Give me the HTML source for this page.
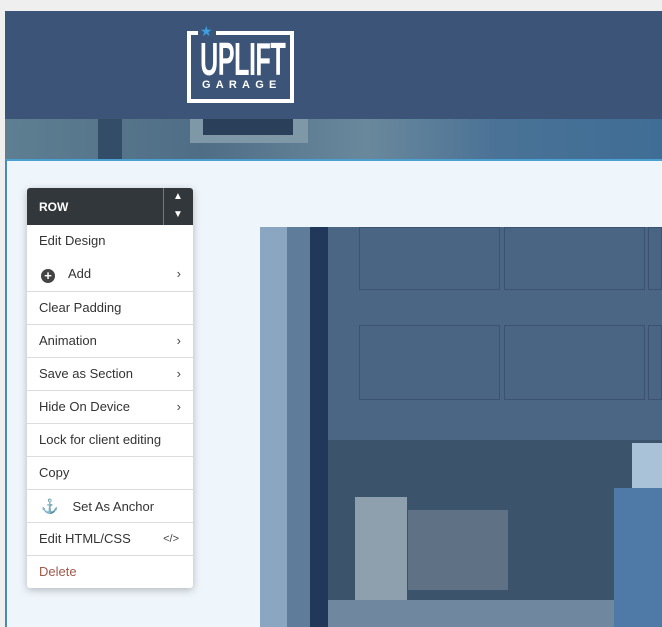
<!DOCTYPE html>
<html><head><style>
*{margin:0;padding:0;box-sizing:border-box}
body{width:662px;height:627px;overflow:hidden;background:#efefef;font-family:"Liberation Sans",sans-serif;position:relative}
.a{position:absolute}
.menu{left:27px;top:188px;width:166px;background:#fff;box-shadow:0 2px 8px rgba(0,0,0,.25);border-radius:3px}
.hd{height:37px;background:#32373b;color:#fff;font-size:12px;font-weight:bold;border-radius:3px 3px 0 0;position:relative}
.it{height:33px;border-top:1px solid #dcdcdc;font-size:13px;color:#333;padding-left:12px;line-height:32px;position:relative}
.ch{position:absolute;right:12px;top:0;font-size:13px;color:#444}
</style></head><body>
<div class="a" style="left:5px;top:11px;width:657px;height:108px;background:#3b5478"></div>
<div class="a" style="left:187px;top:31px;width:107px;height:72px;border:4px solid #fff"></div>
<div class="a" style="left:198px;top:27px;width:18px;height:10px;background:#3b5478"></div>
<div class="a" style="left:200px;top:23px;color:#3ca0e0;font-size:14px">★</div>
<div class="a" style="left:200px;top:36px;color:#fff;font:bold 46px/46px 'Liberation Sans',sans-serif;transform:scaleX(.55);transform-origin:left;letter-spacing:-1px;white-space:nowrap">UPLIFT</div>
<div class="a" style="left:202px;top:79px;color:#fff;font:bold 11px 'Liberation Sans',sans-serif;letter-spacing:5.2px">GARAGE</div>
<div class="a" style="left:5px;top:119px;width:657px;height:40px;background:linear-gradient(90deg,#5e7e92,#4f6e86 30%,#6a889c 55%,#4a7296 75%,#3f6d95)"></div>
<div class="a" style="left:98px;top:119px;width:24px;height:40px;background:#334d68"></div>
<div class="a" style="left:190px;top:119px;width:118px;height:24px;background:#7e98a8"></div>
<div class="a" style="left:203px;top:119px;width:90px;height:16px;background:#2a405a"></div>
<div class="a" style="left:5px;top:159px;width:657px;height:468px;background:#eef5fb;border-left:2px solid #4a8ab8;border-top:2px solid #4aa0d0"></div>
<!-- image -->
<div class="a" style="left:260px;top:227px;width:402px;height:400px;background:#4b6584"></div>
<div class="a" style="left:260px;top:227px;width:27px;height:400px;background:#8aa6c0"></div>
<div class="a" style="left:287px;top:227px;width:23px;height:400px;background:#5f7d9b"></div>
<div class="a" style="left:310px;top:227px;width:18px;height:400px;background:#22385a"></div>
<div class="a" style="left:359px;top:227px;width:141px;height:63px;background:#4a6483;border:1px solid #3b5371"></div>
<div class="a" style="left:504px;top:227px;width:141px;height:63px;background:#4a6483;border:1px solid #3b5371"></div>
<div class="a" style="left:648px;top:227px;width:14px;height:63px;background:#4a6483;border:1px solid #3b5371"></div>
<div class="a" style="left:359px;top:325px;width:141px;height:75px;background:#4a6483;border:1px solid #3b5371"></div>
<div class="a" style="left:504px;top:325px;width:141px;height:75px;background:#4a6483;border:1px solid #3b5371"></div>
<div class="a" style="left:648px;top:325px;width:14px;height:75px;background:#4a6483;border:1px solid #3b5371"></div>
<div class="a" style="left:328px;top:440px;width:334px;height:187px;background:#3c536c"></div>
<div class="a" style="left:355px;top:497px;width:52px;height:108px;background:#8ea0ae"></div>
<div class="a" style="left:408px;top:510px;width:100px;height:80px;background:#5f7184"></div>
<div class="a" style="left:328px;top:600px;width:334px;height:27px;background:#6f889f"></div>
<div class="a" style="left:632px;top:443px;width:30px;height:45px;background:#a9c2d8"></div>
<div class="a" style="left:614px;top:488px;width:48px;height:139px;background:#4f7aa8"></div>
<!-- menu -->
<div class="a menu">
<div class="hd"><span style="position:absolute;left:12px;top:12px">ROW</span>
<div style="position:absolute;left:136px;top:0;width:1px;height:37px;background:#777"></div>
<span style="position:absolute;left:146px;top:3px;font-size:10px">▲</span>
<span style="position:absolute;left:146px;top:21px;font-size:10px">▼</span></div>
<div class="it" style="border-top:none">Edit Design</div>
<div class="it" style="border-top:none;padding-left:14px"><span style="display:inline-block;width:14px;height:14px;border-radius:50%;background:#444;color:#fff;font-size:13px;line-height:13px;text-align:center;font-weight:bold;vertical-align:-2px">+</span><span style="margin-left:13px">Add</span><span class="ch">›</span></div>
<div class="it">Clear Padding</div>
<div class="it">Animation<span class="ch">›</span></div>
<div class="it">Save as Section<span class="ch">›</span></div>
<div class="it">Hide On Device<span class="ch">›</span></div>
<div class="it">Lock for client editing</div>
<div class="it">Copy</div>
<div class="it" style="padding-left:14px"><span style="font-size:14px;color:#555">⚓</span><span style="margin-left:14px">Set As Anchor</span></div>
<div class="it">Edit HTML/CSS<span class="ch" style="right:14px;font-size:11px">&lt;/&gt;</span></div>
<div class="it" style="color:#a0584a">Delete</div>
</div>
</body></html>
